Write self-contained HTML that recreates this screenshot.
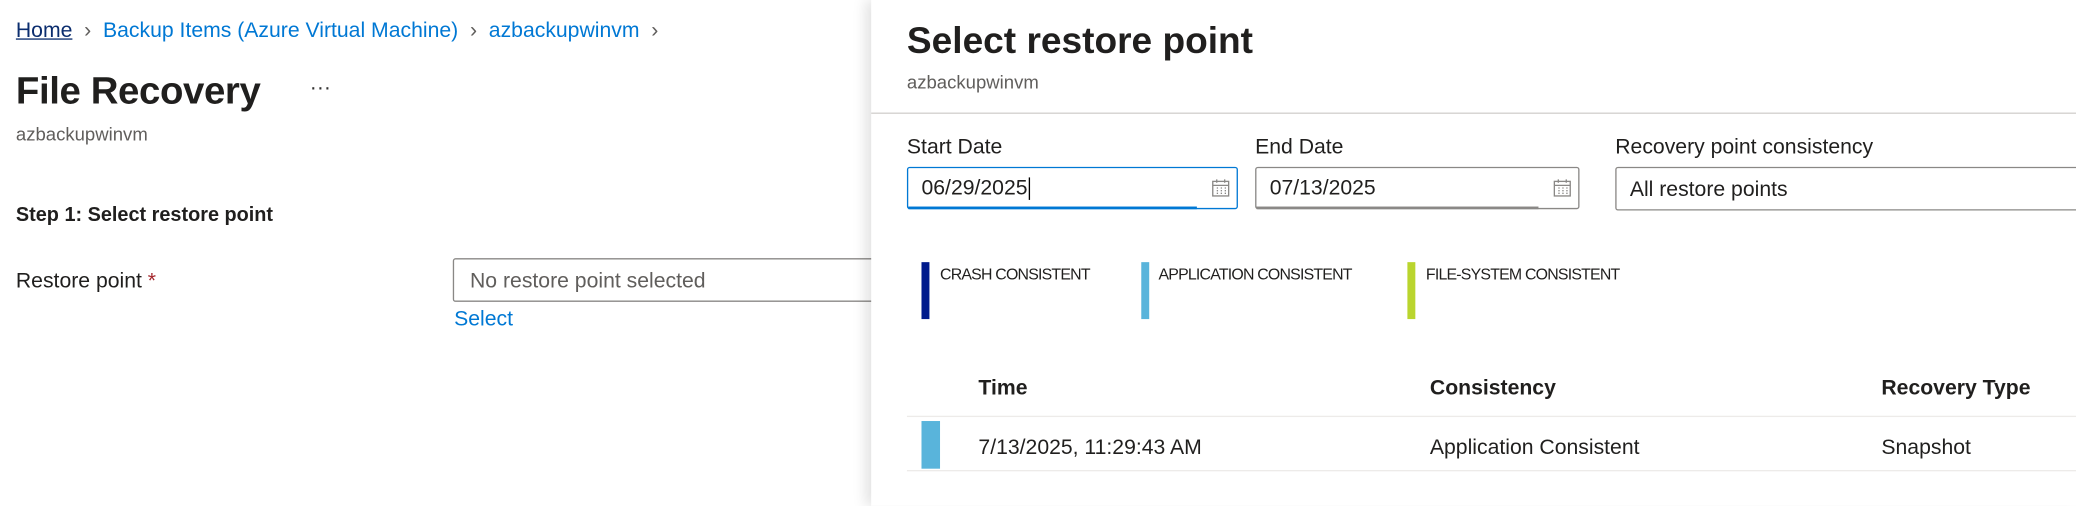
<!DOCTYPE html>
<html><head><meta charset="utf-8"><style>
html,body{margin:0;padding:0;width:2076px;height:506px;overflow:hidden;background:#fff}
#w{position:absolute;left:0;top:0;width:1568px;height:382px;transform:scale(1.32398);transform-origin:0 0;font-family:"Liberation Sans",Arial,sans-serif;color:#201f1e}
.a{position:absolute;white-space:nowrap}
.bc{font-size:16px;color:#0078d4;top:15px}
.chev{color:#605e5c}
.in{position:absolute;border:1px solid #8a8886;border-radius:2px;box-sizing:border-box;background:#fff}
.cal{position:absolute;right:5px;top:8px;width:14px;height:14px}
.bar{position:absolute;width:6px}
.lg{font-size:12px;letter-spacing:-0.6px;top:200px}
.th{font-size:16px;font-weight:bold;top:285px}
.td{font-size:16px;top:330px}
</style></head><body><div id="w">
<div class="a bc" style="left:12px"><span style="color:#0b2d6e;text-decoration:underline">Home</span> <span class="chev">&nbsp;›&nbsp;</span> Backup Items (Azure Virtual Machine) <span class="chev">&nbsp;›&nbsp;</span> azbackupwinvm <span class="chev">&nbsp;›</span></div>
<div class="a" style="left:12px;top:53px;font-size:29px;font-weight:bold;letter-spacing:-0.3px">File Recovery</div>
<div class="a" style="left:234px;top:58px;font-size:16px;color:#323130">···</div>
<div class="a" style="left:12px;top:93px;font-size:14px;color:#605e5c">azbackupwinvm</div>
<div class="a" style="left:12px;top:154px;font-size:15px;font-weight:bold">Step 1: Select restore point</div>
<div class="a" style="left:12px;top:204px;font-size:16px">Restore point <span style="color:#a4262c">*</span></div>
<div class="in" style="left:342px;top:195px;width:330px;height:33px"></div>
<div class="a" style="left:355px;top:204px;font-size:16px;color:#605e5c">No restore point selected</div>
<div class="a" style="left:343px;top:233px;font-size:16px;color:#0078d4">Select</div>

<div style="position:absolute;left:658px;top:0;width:910px;height:382px;background:#fff;box-shadow:-4px 0 10px rgba(0,0,0,0.12)"></div>
<div class="a" style="left:685px;top:15px;font-size:28px;font-weight:bold">Select restore point</div>
<div class="a" style="left:685px;top:54px;font-size:14px;color:#605e5c">azbackupwinvm</div>
<div style="position:absolute;left:658px;top:85px;width:910px;height:1px;background:#d2d0ce"></div>
<div class="a" style="left:685px;top:103px;font-size:16px">Start Date</div>
<div class="a" style="left:948px;top:103px;font-size:16px">End Date</div>
<div class="a" style="left:1220px;top:103px;font-size:16px">Recovery point consistency</div>
<div class="in" style="left:685px;top:126px;width:250px;height:32px;border-color:#0078d4"><div style="position:absolute;left:0;bottom:-1px;width:218px;height:2px;background:#0078d4"></div>
<svg class="cal" viewBox="0 0 14 14"><rect x="1" y="2" width="12" height="11" fill="none" stroke="#8a8886"/><line x1="1" y1="5" x2="13" y2="5" stroke="#8a8886"/><line x1="4" y1="0.5" x2="4" y2="3" stroke="#8a8886"/><line x1="10" y1="0.5" x2="10" y2="3" stroke="#8a8886"/><path d="M4 7h1M7 7h1M10 7h1M4 9h1M7 9h1M10 9h1M4 11h1M7 11h1M10 11h1" stroke="#8a8886" stroke-width="1"/></svg></div>
<div class="a" style="left:696px;top:134px;font-size:16px">06/29/2025<span style="border-left:1px solid #000;margin-left:1px"></span></div>
<div class="in" style="left:948px;top:126px;width:245px;height:32px"><div style="position:absolute;left:0;bottom:-1px;width:213px;height:2px;background:#8a8886"></div>
<svg class="cal" viewBox="0 0 14 14"><rect x="1" y="2" width="12" height="11" fill="none" stroke="#8a8886"/><line x1="1" y1="5" x2="13" y2="5" stroke="#8a8886"/><line x1="4" y1="0.5" x2="4" y2="3" stroke="#8a8886"/><line x1="10" y1="0.5" x2="10" y2="3" stroke="#8a8886"/><path d="M4 7h1M7 7h1M10 7h1M4 9h1M7 9h1M10 9h1M4 11h1M7 11h1M10 11h1" stroke="#8a8886" stroke-width="1"/></svg></div>
<div class="a" style="left:959px;top:134px;font-size:16px">07/13/2025</div>
<div class="in" style="left:1220px;top:126px;width:360px;height:33px"></div>
<div class="a" style="left:1231px;top:135px;font-size:16px">All restore points</div>

<div class="bar" style="left:696px;top:198px;height:43px;background:#001a8c"></div>
<div class="a lg" style="left:710px">CRASH CONSISTENT</div>
<div class="bar" style="left:862px;top:198px;height:43px;background:#59b4db"></div>
<div class="a lg" style="left:875px">APPLICATION CONSISTENT</div>
<div class="bar" style="left:1063px;top:198px;height:43px;background:#bad52e"></div>
<div class="a lg" style="left:1077px">FILE-SYSTEM CONSISTENT</div>

<div class="a th" style="left:739px">Time</div>
<div class="a th" style="left:1080px">Consistency</div>
<div class="a th" style="left:1421px">Recovery Type</div>
<div style="position:absolute;left:685px;top:314px;width:883px;height:1px;background:#edebe9"></div>
<div class="bar" style="left:696px;top:318px;height:36px;width:14px;background:#59b4db"></div>
<div class="a td" style="left:739px">7/13/2025, 11:29:43 AM</div>
<div class="a td" style="left:1080px">Application Consistent</div>
<div class="a td" style="left:1421px">Snapshot</div>
<div style="position:absolute;left:685px;top:355px;width:883px;height:1px;background:#edebe9"></div>
</div></body></html>
